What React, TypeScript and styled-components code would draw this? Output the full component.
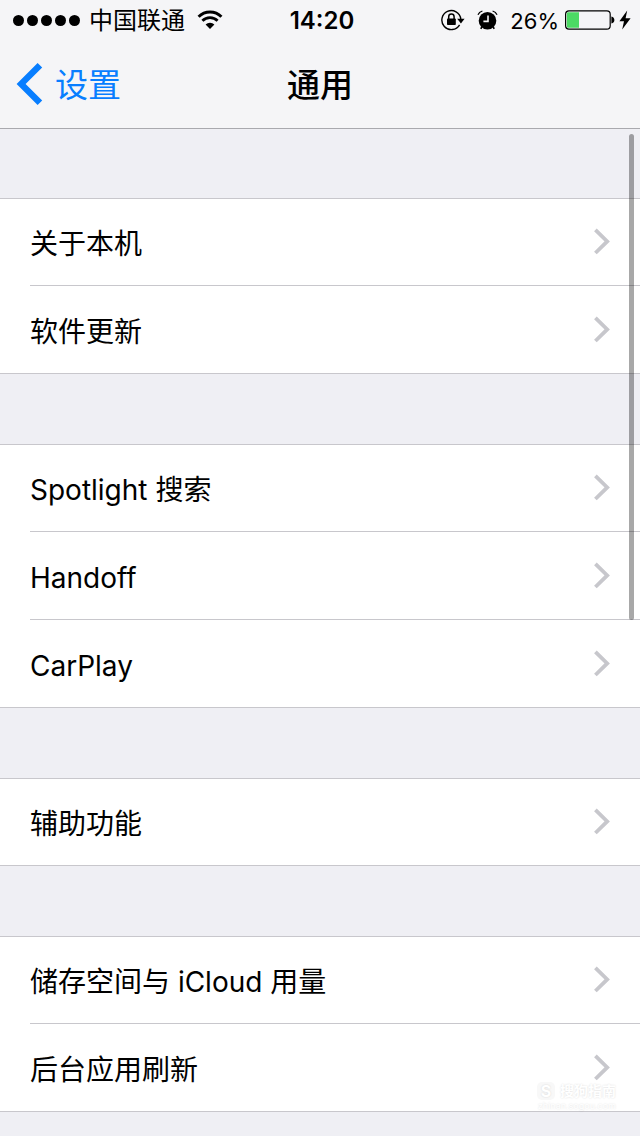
import React from "react";
import styled, { createGlobalStyle } from "styled-components";

const GlobalStyle = createGlobalStyle`
  *, *::before, *::after { box-sizing: border-box; }
  body {
    margin: 0;
    background: #efeff4;
    color: #000;
    font-family: Inter, "Noto Sans CJK SC", sans-serif;
    -webkit-font-smoothing: antialiased;
  }
`;

const Page = styled.div`
  position: relative;
  min-height: 100vh;
`;

const Header = styled.header`
  background: #f5f5f7;
  box-shadow: 0 1px 0 #a9a9ae;
`;

const StatusBar = styled.div`
  display: grid;
  grid-template-columns: 1fr auto 1fr;
  align-items: center;
  height: 40px;
  padding: 0 9px 0 13px;
  font-size: 24px;
  line-height: 32px;
`;

const StatusGroup = styled.div<{ $end?: boolean }>`
  display: flex;
  align-items: center;
  justify-content: ${(p) => (p.$end ? "flex-end" : "flex-start")};
`;

const Signal = styled.span`
  display: flex;
  gap: 3px;
  margin-right: 9px;
`;

const Dot = styled.span`
  width: 11px;
  height: 11px;
  border-radius: 50%;
  background: #000;
`;

const Carrier = styled.span`
  margin-right: 12px;
  padding-top: 2px;
`;

const Time = styled.time`
  padding-top: 2px;
  font-weight: 600;
`;

const Percent = styled.span`
  margin: 0 6px 0 12px;
  padding-top: 2px;
  font-size: 22px;
`;

const Icon = styled.svg`
  display: block;
  flex: none;
`;

const AlarmIcon = styled(Icon)`
  margin-left: 12px;
`;

const BoltIcon = styled(Icon)`
  margin-left: 4px;
`;

const NavBar = styled.nav`
  display: grid;
  grid-template-columns: 1fr auto 1fr;
  align-items: center;
  height: 88px;
  padding: 0 16px;
`;

const BackButton = styled.button`
  display: flex;
  align-items: center;
  justify-self: start;
  gap: 12px;
  padding: 0;
  border: 0;
  background: none;
  color: #087eff;
  font: inherit;
  font-size: 33px;
  line-height: 40px;
  cursor: pointer;
`;

const BackLabel = styled.span`
  padding-top: 2px;
`;

const Title = styled.h1`
  margin: 0;
  padding-top: 2px;
  font-size: 33px;
  font-weight: 500;
  line-height: 40px;
`;

const Main = styled.main`
  display: flex;
  flex-direction: column;
  gap: 70px;
  padding: 70px 0 24px;
`;

const Group = styled.ul`
  margin: 0;
  padding: 0;
  list-style: none;
  background: #fff;
  box-shadow: inset 0 1px 0 #c8c7cc;
`;

const Item = styled.li`
  padding-left: 30px;

  &:last-child {
    padding-left: 0;
  }

  &:last-child > a {
    padding-left: 30px;
  }
`;

const RowLink = styled.a`
  display: flex;
  align-items: center;
  justify-content: space-between;
  height: 88px;
  padding: 0 30px 0 0;
  border-bottom: 1px solid #c8c7cc;
  color: inherit;
  font-size: 28px;
  line-height: 40px;
  text-decoration: none;
`;

const RowLabel = styled.span`
  padding-top: 4px;
`;

const ScrollThumb = styled.div`
  position: absolute;
  top: 134px;
  right: 6px;
  width: 5px;
  height: 486px;
  border-radius: 3px;
  background: rgba(0, 0, 0, 0.34);
`;

const Watermark = styled.div`
  position: absolute;
  right: 24px;
  bottom: 24px;
  display: grid;
  justify-items: end;
  color: #fff;
  text-shadow: 0 0 2px rgba(0, 0, 0, 0.14);
  pointer-events: none;
`;

const WatermarkBrand = styled.span`
  display: flex;
  align-items: center;
  gap: 5px;
  font-size: 14px;
  font-weight: 700;
  line-height: 18px;
`;

const WatermarkBadge = styled.span`
  width: 18px;
  border-radius: 5px;
  background: #f8f8f8;
  font-size: 16px;
  text-align: center;
`;

const WatermarkSite = styled.span`
  font-size: 9px;
  line-height: 12px;
`;

const Chevron = () => (
  <Icon width="17" height="28" viewBox="0 0 17 28" fill="none" aria-hidden="true">
    <path d="M2.4 1.8 14.2 13.4 2.4 25" stroke="#c7c7cc" strokeWidth="3.8" />
  </Icon>
);

const BackIcon = () => (
  <Icon width="27" height="42" viewBox="0 0 27 42" aria-hidden="true">
    <path d="M21.6 0 26.2 4.5 9.6 21 26.2 37.5 21.6 42 0.6 21Z" fill="currentColor" />
  </Icon>
);

const WifiIcon = () => (
  <Icon width="26" height="20" viewBox="0 0 26 20" fill="none" stroke="#000" aria-hidden="true">
    <path d="M1.6 6.7a16 16 0 0 1 22.8 0" strokeWidth="3" />
    <path d="M5.4 10.8a10.7 10.7 0 0 1 15.2 0" strokeWidth="2.8" />
    <path d="M13 19 8.6 14.5a6.2 6.2 0 0 1 8.8 0Z" fill="#000" stroke="none" />
  </Icon>
);

const RotationLock = () => (
  <Icon width="24" height="22" viewBox="0 0 24 22" fill="none" aria-hidden="true">
    <path d="M18.6 15.8A9.5 9.5 0 1 1 19.8 10" stroke="#000" strokeWidth="1.4" />
    <path d="M16.2 9.8h7.4L19.9 14.4Z" fill="#000" />
    <path d="M7.7 10V7.8a2.7 2.7 0 0 1 5.4 0V10" stroke="#000" strokeWidth="1.5" />
    <rect x="6" y="9.4" width="8.8" height="6.6" rx="0.8" fill="#000" />
  </Icon>
);

const Alarm = () => (
  <AlarmIcon width="21" height="20" viewBox="0 0 21 20" fill="none" aria-hidden="true">
    <circle cx="10.5" cy="10.8" r="8.8" fill="#000" />
    <path d="M1 4.8Q2.2 2 5.4 1M20 4.8Q18.8 2 15.6 1" stroke="#000" strokeWidth="1.3" />
    <path d="M4.8 17 3.8 18.8M16.2 17 17.2 18.8" stroke="#000" strokeWidth="1.6" />
    <path d="M11 5.4V11.4H6.4" stroke="#f5f5f7" strokeWidth="1.6" />
  </AlarmIcon>
);

const Battery = () => (
  <Icon width="50" height="20" viewBox="0 0 50 20" fill="none" aria-hidden="true">
    <rect x="0.6" y="0.8" width="44.6" height="18.4" rx="3.4" stroke="#000" strokeWidth="1.2" />
    <path d="M3.2 2.2H14V17.8H3.2a1.4 1.4 0 0 1-1.4-1.4V3.6a1.4 1.4 0 0 1 1.4-1.4Z" fill="#4cd964" />
    <path d="M46.4 6.4c4 .8 4 6.4 0 7.2Z" fill="#000" />
  </Icon>
);

const Bolt = () => (
  <BoltIcon width="12" height="20" viewBox="0 0 12 20" aria-hidden="true">
    <path d="M8.2 0.6 0.4 11.2H5L3.2 19.4 11.6 8.2H6.6Z" fill="#000" />
  </BoltIcon>
);

const groups = [
  ["关于本机", "软件更新"],
  ["Spotlight 搜索", "Handoff", "CarPlay"],
  ["辅助功能"],
  ["储存空间与 iCloud 用量", "后台应用刷新"],
];

export default function App() {
  return (
    <Page lang="zh-CN">
      <GlobalStyle />
      <Header>
        <StatusBar>
          <StatusGroup>
            <Signal>
              {[0, 1, 2, 3, 4].map((n) => (
                <Dot key={n} />
              ))}
            </Signal>
            <Carrier>中国联通</Carrier>
            <WifiIcon />
          </StatusGroup>
          <Time>14:20</Time>
          <StatusGroup $end>
            <RotationLock />
            <Alarm />
            <Percent>26%</Percent>
            <Battery />
            <Bolt />
          </StatusGroup>
        </StatusBar>
        <NavBar>
          <BackButton type="button">
            <BackIcon />
            <BackLabel>设置</BackLabel>
          </BackButton>
          <Title>通用</Title>
        </NavBar>
      </Header>
      <Main>
        {groups.map((labels) => (
          <Group key={labels[0]}>
            {labels.map((label) => (
              <Item key={label}>
                <RowLink href="#">
                  <RowLabel>{label}</RowLabel>
                  <Chevron />
                </RowLink>
              </Item>
            ))}
          </Group>
        ))}
      </Main>
      <ScrollThumb />
      <Watermark>
        <WatermarkBrand>
          <WatermarkBadge>S</WatermarkBadge>
          搜狗指南
        </WatermarkBrand>
        <WatermarkSite>zhinan.sogou.com</WatermarkSite>
      </Watermark>
    </Page>
  );
}
